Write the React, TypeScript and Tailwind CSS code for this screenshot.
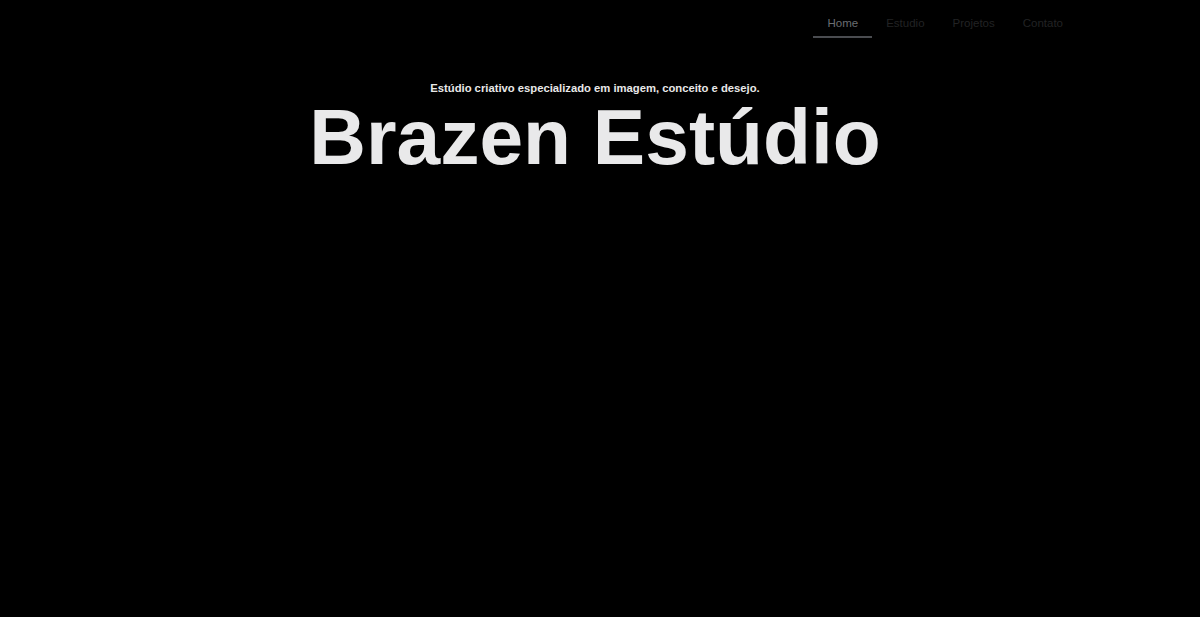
import React from 'react';

const links = ['Home', 'Estudio', 'Projetos', 'Contato'];

export default function App() {
  return (
    <div className="min-h-[617px] bg-black font-['Liberation_Sans',Arial,sans-serif]">
      {/* Top navigation */}
      <nav className="flex justify-end pr-[123px] pt-[15px]">
        {links.map((l, i) => (
          <a
            key={l}
            href="#"
            className={`px-[14px] pb-[5px] text-[11.5px] leading-[16px] border-b-2 ${
              i === 0 ? 'text-[#6b6e72] border-[#4a4c50]' : 'text-[#222324] border-transparent'
            }`}
          >
            {l}
          </a>
        ))}
      </nav>

      {/* Hero */}
      <header className="flex flex-col items-center pr-[10px] pt-[44px]">
        <p className="text-[11.25px] leading-[13px] font-bold text-[#e8e8e8]">
          Estúdio criativo especializado em imagem, conceito e desejo.
        </p>
        <h1 className="-mt-px text-[78.5px] leading-[86px] font-bold text-[#e9e9ea]">Brazen Estúdio</h1>
      </header>
    </div>
  );
}
